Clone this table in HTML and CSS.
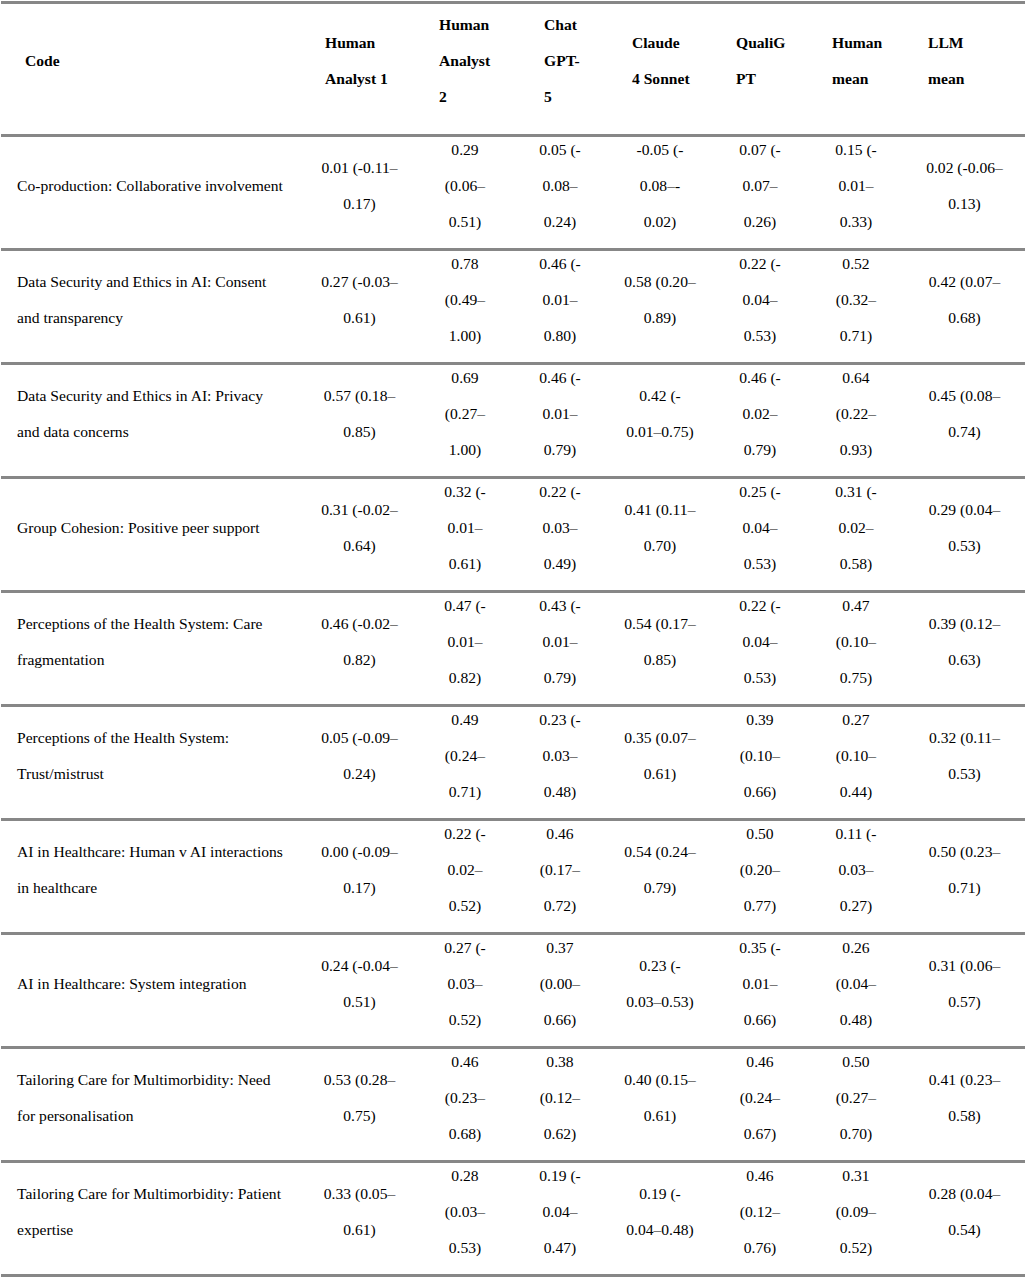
FILE: index.html
```html
<!DOCTYPE html>
<html lang="en">
<head>
<meta charset="utf-8">
<title>Agreement by code</title>
<link rel="stylesheet" href="styles.css">
</head>
<body>
<table class="results">
  <colgroup>
    <col class="c-code">
    <col class="c-ha1">
    <col class="c-ha2">
    <col class="c-chat">
    <col class="c-claude">
    <col class="c-quali">
    <col class="c-hmean">
    <col class="c-lmean">
  </colgroup>
  <thead>
    <tr>
      <th><span class="t">Code</span></th>
      <th><span class="t">Human<br>Analyst 1</span></th>
      <th class="h-ha2"><span class="t">Human<br>Analyst<br>2</span></th>
      <th class="h-chat"><span class="t">Chat<br>GPT-<br>5</span></th>
      <th><span class="t">Claude<br>4 Sonnet</span></th>
      <th><span class="t">QualiG<br>PT</span></th>
      <th><span class="t">Human<br>mean</span></th>
      <th><span class="t">LLM<br>mean</span></th>
    </tr>
  </thead>
  <tbody>
    <tr>
      <td class="code"><span class="t">Co-production: Collaborative involvement</span></td>
      <td><span class="t">0.01 (-0.11–<br>0.17)</span></td>
      <td><span class="t">0.29<br>(0.06–<br>0.51)</span></td>
      <td><span class="t">0.05 (-<br>0.08–<br>0.24)</span></td>
      <td><span class="t">-0.05 (-<br>0.08–-<br>0.02)</span></td>
      <td><span class="t">0.07 (-<br>0.07–<br>0.26)</span></td>
      <td><span class="t">0.15 (-<br>0.01–<br>0.33)</span></td>
      <td><span class="t">0.02 (-0.06–<br>0.13)</span></td>
    </tr>
    <tr>
      <td class="code"><span class="t">Data Security and Ethics in AI: Consent<br>and transparency</span></td>
      <td><span class="t">0.27 (-0.03–<br>0.61)</span></td>
      <td><span class="t">0.78<br>(0.49–<br>1.00)</span></td>
      <td><span class="t">0.46 (-<br>0.01–<br>0.80)</span></td>
      <td><span class="t">0.58 (0.20–<br>0.89)</span></td>
      <td><span class="t">0.22 (-<br>0.04–<br>0.53)</span></td>
      <td><span class="t">0.52<br>(0.32–<br>0.71)</span></td>
      <td><span class="t">0.42 (0.07–<br>0.68)</span></td>
    </tr>
    <tr>
      <td class="code"><span class="t">Data Security and Ethics in AI: Privacy<br>and data concerns</span></td>
      <td><span class="t">0.57 (0.18–<br>0.85)</span></td>
      <td><span class="t">0.69<br>(0.27–<br>1.00)</span></td>
      <td><span class="t">0.46 (-<br>0.01–<br>0.79)</span></td>
      <td><span class="t">0.42 (-<br>0.01–0.75)</span></td>
      <td><span class="t">0.46 (-<br>0.02–<br>0.79)</span></td>
      <td><span class="t">0.64<br>(0.22–<br>0.93)</span></td>
      <td><span class="t">0.45 (0.08–<br>0.74)</span></td>
    </tr>
    <tr>
      <td class="code"><span class="t">Group Cohesion: Positive peer support</span></td>
      <td><span class="t">0.31 (-0.02–<br>0.64)</span></td>
      <td><span class="t">0.32 (-<br>0.01–<br>0.61)</span></td>
      <td><span class="t">0.22 (-<br>0.03–<br>0.49)</span></td>
      <td><span class="t">0.41 (0.11–<br>0.70)</span></td>
      <td><span class="t">0.25 (-<br>0.04–<br>0.53)</span></td>
      <td><span class="t">0.31 (-<br>0.02–<br>0.58)</span></td>
      <td><span class="t">0.29 (0.04–<br>0.53)</span></td>
    </tr>
    <tr>
      <td class="code"><span class="t">Perceptions of the Health System: Care<br>fragmentation</span></td>
      <td><span class="t">0.46 (-0.02–<br>0.82)</span></td>
      <td><span class="t">0.47 (-<br>0.01–<br>0.82)</span></td>
      <td><span class="t">0.43 (-<br>0.01–<br>0.79)</span></td>
      <td><span class="t">0.54 (0.17–<br>0.85)</span></td>
      <td><span class="t">0.22 (-<br>0.04–<br>0.53)</span></td>
      <td><span class="t">0.47<br>(0.10–<br>0.75)</span></td>
      <td><span class="t">0.39 (0.12–<br>0.63)</span></td>
    </tr>
    <tr>
      <td class="code"><span class="t">Perceptions of the Health System:<br>Trust/mistrust</span></td>
      <td><span class="t">0.05 (-0.09–<br>0.24)</span></td>
      <td><span class="t">0.49<br>(0.24–<br>0.71)</span></td>
      <td><span class="t">0.23 (-<br>0.03–<br>0.48)</span></td>
      <td><span class="t">0.35 (0.07–<br>0.61)</span></td>
      <td><span class="t">0.39<br>(0.10–<br>0.66)</span></td>
      <td><span class="t">0.27<br>(0.10–<br>0.44)</span></td>
      <td><span class="t">0.32 (0.11–<br>0.53)</span></td>
    </tr>
    <tr>
      <td class="code"><span class="t">AI in Healthcare: Human v AI interactions<br>in healthcare</span></td>
      <td><span class="t">0.00 (-0.09–<br>0.17)</span></td>
      <td><span class="t">0.22 (-<br>0.02–<br>0.52)</span></td>
      <td><span class="t">0.46<br>(0.17–<br>0.72)</span></td>
      <td><span class="t">0.54 (0.24–<br>0.79)</span></td>
      <td><span class="t">0.50<br>(0.20–<br>0.77)</span></td>
      <td><span class="t">0.11 (-<br>0.03–<br>0.27)</span></td>
      <td><span class="t">0.50 (0.23–<br>0.71)</span></td>
    </tr>
    <tr>
      <td class="code"><span class="t">AI in Healthcare: System integration</span></td>
      <td><span class="t">0.24 (-0.04–<br>0.51)</span></td>
      <td><span class="t">0.27 (-<br>0.03–<br>0.52)</span></td>
      <td><span class="t">0.37<br>(0.00–<br>0.66)</span></td>
      <td><span class="t">0.23 (-<br>0.03–0.53)</span></td>
      <td><span class="t">0.35 (-<br>0.01–<br>0.66)</span></td>
      <td><span class="t">0.26<br>(0.04–<br>0.48)</span></td>
      <td><span class="t">0.31 (0.06–<br>0.57)</span></td>
    </tr>
    <tr>
      <td class="code"><span class="t">Tailoring Care for Multimorbidity: Need<br>for personalisation</span></td>
      <td><span class="t">0.53 (0.28–<br>0.75)</span></td>
      <td><span class="t">0.46<br>(0.23–<br>0.68)</span></td>
      <td><span class="t">0.38<br>(0.12–<br>0.62)</span></td>
      <td><span class="t">0.40 (0.15–<br>0.61)</span></td>
      <td><span class="t">0.46<br>(0.24–<br>0.67)</span></td>
      <td><span class="t">0.50<br>(0.27–<br>0.70)</span></td>
      <td><span class="t">0.41 (0.23–<br>0.58)</span></td>
    </tr>
    <tr>
      <td class="code"><span class="t">Tailoring Care for Multimorbidity: Patient<br>expertise</span></td>
      <td><span class="t">0.33 (0.05–<br>0.61)</span></td>
      <td><span class="t">0.28<br>(0.03–<br>0.53)</span></td>
      <td><span class="t">0.19 (-<br>0.04–<br>0.47)</span></td>
      <td><span class="t">0.19 (-<br>0.04–0.48)</span></td>
      <td><span class="t">0.46<br>(0.12–<br>0.76)</span></td>
      <td><span class="t">0.31<br>(0.09–<br>0.52)</span></td>
      <td><span class="t">0.28 (0.04–<br>0.54)</span></td>
    </tr>
  </tbody>
</table>
</body>
</html>
```

FILE: styles.css
```css
html, body {
  background: #ffffff;
}

body {
  margin: 1px;
  font-family: "Liberation Serif", "Times New Roman", serif;
  color: #000000;
}

.results {
  width: 1024px;
  table-layout: fixed;
  border-collapse: separate;
  border-spacing: 0;
  font-size: 15.6px;
}

.c-code { width: 300px; }
.c-ha1 { width: 117px; }
.c-ha2 { width: 94px; }
.c-chat { width: 96px; }
.c-claude { width: 104px; }
.c-quali { width: 96px; }
.c-hmean { width: 96px; }
.c-lmean { width: 121px; }

.results th,
.results td {
  line-height: 36px;
  vertical-align: middle;
  white-space: nowrap;
}

.results th {
  border-top: 3px solid #878787;
  border-bottom: 3px solid #878787;
  padding: 9px 0 13px 24px;
  text-align: left;
  font-weight: bold;
}

.results th.h-ha2 {
  padding-left: 21px;
}

.results th.h-chat {
  padding-left: 32px;
}

.results td {
  border-bottom: 3px solid #878787;
  padding: 1px 0 2px 0;
  text-align: center;
  font-weight: normal;
}

.results td.code {
  text-align: left;
  padding-left: 16px;
}

.t {
  line-height: 24px;
  vertical-align: top;
}
```
